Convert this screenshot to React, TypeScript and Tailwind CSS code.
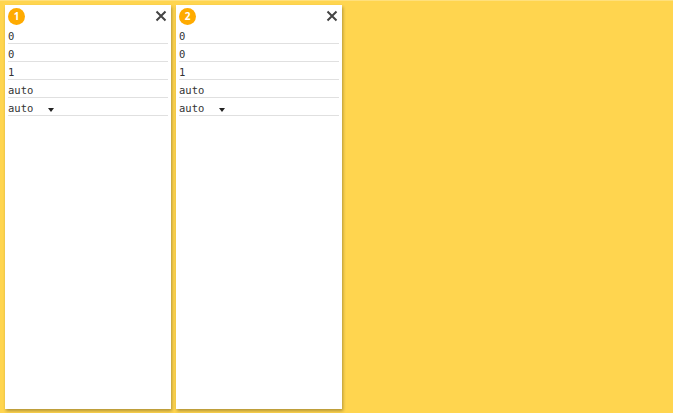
import React from 'react'

const rows = ['0', '0', '1', 'auto']

function CloseIcon() {
	return (
		<svg width="12" height="12" viewBox="0 0 12 12" className="text-[#444]">
			<path d="M1.5 1.5 L10.5 10.5 M10.5 1.5 L1.5 10.5" stroke="currentColor" strokeWidth="2" />
		</svg>
	)
}

const rowClass =
	"h-[18px] border-b border-[#e0e0e0] flex items-start pt-[4px] text-[10.5px] leading-[13px] text-[#333] font-['DejaVu_Sans_Mono',monospace]"

function Panel({ index }: { index: number }) {
	return (
		<div className="w-[166px] h-[404px] bg-white shadow-[1px_2px_3px_rgba(0,0,0,0.3)] px-[3px] flex flex-col">
			<div className="h-[21px] flex items-center justify-between pt-[2px]">
				<div className="w-[17px] h-[17px] rounded-full bg-[#ffab00] text-white text-[10px] font-bold flex items-center justify-center font-['Open_Sans',sans-serif]">
					{index}
				</div>
				<div className="pr-[1px] pb-[1px]">
					<CloseIcon />
				</div>
			</div>
			{rows.map((value, i) => (
				<div key={i} className={rowClass}>
					{value}
				</div>
			))}
			<div className={rowClass}>
				<span className="w-[40px]">auto</span>
				<span className="w-0 h-0 mt-[6px] border-l-[3px] border-r-[3px] border-t-[4px] border-l-transparent border-r-transparent border-t-[#222]" />
			</div>
		</div>
	)
}

export default function App() {
	return (
		<div className="w-[673px] h-[413px] bg-[#ffd54f] border-t border-[#ffe07c] flex gap-[5px] pl-[5px] pt-[4px]">
			<Panel index={1} />
			<Panel index={2} />
		</div>
	)
}
